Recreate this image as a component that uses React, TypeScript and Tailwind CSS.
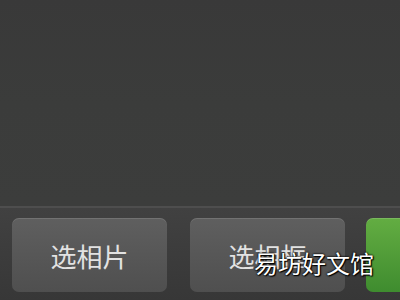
export default function App() {
  const cjk = { fontFamily: '"Noto Sans CJK SC", "Noto Sans", sans-serif' };
  return (
    <div className="w-[400px] h-[300px] overflow-hidden flex flex-col bg-[#3a3b3a]" style={cjk}>
      {/* preview area */}
      <div className="h-[206px] bg-gradient-to-b from-[#393939] via-[#3b3c3b] to-[#3c3d3c]" />

      {/* bottom bar */}
      <div className="relative flex-1 border-t-2 border-[#4e4e4e] bg-gradient-to-b from-[#414141] to-[#373737] flex pl-[12px] pt-[10px] pb-[8px]">
        <button className="w-[155px] shrink-0 rounded-[7px] bg-gradient-to-b from-[#5f5f5f] to-[#4f4f4f] shadow-[inset_0_1px_0_rgba(255,255,255,0.12)] text-[26px] text-[#e2e2e2] flex items-center justify-center">
          选相片
        </button>
        <button className="ml-[23px] w-[155px] shrink-0 rounded-[7px] bg-gradient-to-b from-[#5f5f5f] to-[#4f4f4f] shadow-[inset_0_1px_0_rgba(255,255,255,0.12)] text-[26px] text-[#e2e2e2] flex items-center justify-center">
          选相框
        </button>
        <button className="ml-[21px] w-[120px] shrink-0 rounded-[7px] bg-gradient-to-b from-[#63ad42] to-[#3f8c2f] shadow-[inset_0_1px_0_rgba(255,255,255,0.15)]" />

        {/* watermark */}
        <span className="absolute left-[254px] top-[43px] text-[24px] leading-none text-white [text-shadow:0_0_2px_#000,0_0_2px_#000,1px_1px_1px_#000]">
          易坊好文馆
        </span>
      </div>
    </div>
  );
}
